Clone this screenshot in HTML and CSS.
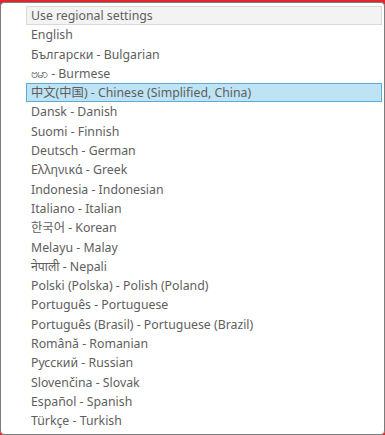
FILE: index.html
```html
<!DOCTYPE html>
<html lang="en">
<head>
    <meta charset="UTF-8">
    <title>Language</title>
    <link rel="stylesheet" href="styles.css">
</head>
<body>
    <div class="panel">
        <ul class="lang-list">
            <li class="lang-item first">Use regional settings</li>
            <li class="lang-item">English</li>
            <li class="lang-item">Български - Bulgarian</li>
            <li class="lang-item">ဗမာ - Burmese</li>
            <li class="lang-item selected">中文(中国) - Chinese (Simplified, China)</li>
            <li class="lang-item">Dansk - Danish</li>
            <li class="lang-item">Suomi - Finnish</li>
            <li class="lang-item">Deutsch - German</li>
            <li class="lang-item">Ελληνικά - Greek</li>
            <li class="lang-item">Indonesia - Indonesian</li>
            <li class="lang-item">Italiano - Italian</li>
            <li class="lang-item">한국어 - Korean</li>
            <li class="lang-item">Melayu - Malay</li>
            <li class="lang-item">नेपाली - Nepali</li>
            <li class="lang-item">Polski (Polska) - Polish (Poland)</li>
            <li class="lang-item">Português - Portuguese</li>
            <li class="lang-item">Português (Brasil) - Portuguese (Brazil)</li>
            <li class="lang-item">Română - Romanian</li>
            <li class="lang-item">Русский - Russian</li>
            <li class="lang-item">Slovenčina - Slovak</li>
            <li class="lang-item">Español - Spanish</li>
            <li class="lang-item">Türkçe - Turkish</li>
        </ul>
    </div>
</body>
</html>
```

FILE: styles.css
```css
html, body {
    margin: 0;
    padding: 0;
    height: 100%;
    overflow: hidden;
}
body {
    background-color: #e0282c;
    font-family: "Noto Sans", "Noto Sans CJK SC", sans-serif;
    font-size: 12.3px;
    color: #5e5e5e;
    padding-top: 2px;
    box-sizing: border-box;
}
.panel {
    background-color: #fff;
    border: 1px solid #7c7c7c;
    border-radius: 4px;
    height: 433px;
    box-sizing: border-box;
    padding: 3px 2px 0 25px;
}
.lang-list {
    list-style: none;
    margin: 0;
    padding: 0;
}
.lang-item {
    height: 19.3px;
    line-height: 17px;
    padding-left: 4px;
    border: 1px solid transparent;
    box-sizing: border-box;
    white-space: nowrap;
}
.lang-item.first {
    background-color: #f3f3f3;
    border-color: #d9d9d9;
}
.lang-item.selected {
    background-color: #bde3f5;
    border-color: #5aaadc;
}
```
